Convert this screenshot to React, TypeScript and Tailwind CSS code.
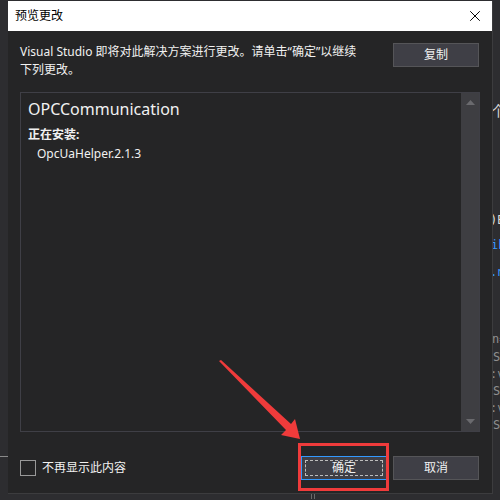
import { X } from "lucide-react";

const font = "font-['Noto_Sans','Noto_Sans_CJK_SC',sans-serif]";

function Btn({ label, primary }: { label: string; primary?: boolean }) {
  return (
    <button
      className={
        "w-[86px] h-[24px] bg-[#3f3f46] text-[12px] text-[#f1f1f1] flex items-center justify-center " +
        (primary ? "border border-[#3399ff] p-[3px]" : "border border-[#555558]")
      }
    >
      {primary ? (
        <span className="w-full h-full border border-dashed border-[#bdbdbd] flex items-center justify-center">
          {label}
        </span>
      ) : (
        label
      )}
    </button>
  );
}

export default function App() {
  return (
    <div className={`w-[500px] h-[500px] bg-[#2d2d30] relative overflow-hidden ${font}`}>
      <div className="flex pt-[1px] h-[494px]">
        {/* left backdrop */}
        <div className="w-[8px] flex flex-col">
          <div className="h-[455px]" />
          <div className="h-[1px] bg-[#8a8a8a]" />
        </div>

        {/* dialog */}
        <div className="w-[485px] flex flex-col bg-[#252526] border-r border-b border-[#3c3c3e]">
          <div className="h-[30px] bg-white flex items-center justify-between pl-[7px] pr-[8px]">
            <span className="text-[12px] text-black">预览更改</span>
            <X size={18} strokeWidth={1.3} className="text-black" />
          </div>

          <div className="flex-1 flex flex-col px-[12px] pt-[12px]">
            <div className="flex justify-between pr-[1px]">
              <p className="text-[12px] leading-[18px] text-[#f1f1f1]">
                Visual Studio 即将对此解决方案进行更改。请单击“确定”以继续
                <br />
                下列更改。
              </p>
              <Btn label="复制" />
            </div>

            <div className="mt-[13px] h-[340px] w-[460px] border border-[#3f3f46] flex">
              <div className="flex-1 pl-[7px] pt-[4px] text-[#f1f1f1]">
                <div className="text-[16px] leading-[24px]">OPCCommunication</div>
                <div className="text-[12px] leading-[18px] font-bold mt-[5px]">正在安装:</div>
                <div className="text-[12px] leading-[18px] pl-[9px] mt-[1px]">OpcUaHelper.2.1.3</div>
              </div>
              <div className="w-[18px] bg-[#3e3e42] flex flex-col justify-between items-center py-[7px]">
                <svg width="9" height="5" viewBox="0 0 9 5">
                  <polygon points="0,5 4.5,0 9,5" fill="#6a6a6e" />
                </svg>
                <svg width="9" height="5" viewBox="0 0 9 5">
                  <polygon points="0,0 9,0 4.5,5" fill="#6a6a6e" />
                </svg>
              </div>
            </div>

            <div className="mt-[24px] flex items-center justify-between">
              <label className="flex items-center gap-[6px] text-[12px] text-[#f1f1f1]">
                <span className="w-[16px] h-[16px] border border-[#999999] bg-[#252526]" />
                不再显示此内容
              </label>
              <div className="flex gap-[6px] pr-[1px]">
                <Btn label="确定" primary />
                <Btn label="取消" />
              </div>
            </div>
          </div>
        </div>

        {/* right backdrop (editor behind) */}
        <div className="w-[7px] overflow-hidden flex flex-col text-[12px] leading-[14px] whitespace-nowrap font-['DejaVu_Sans_Mono',monospace]">
          <div className="h-[102px]" />
          <div className="text-[#d4d4d4] text-[15px] leading-[16px] -ml-[2px]">个</div>
          <div className="h-[94px]" />
          <div className="text-[#dcdcdc] -ml-[3px]">)B</div>
          <div className="h-[11px]" />
          <div className="text-[#3794ff] -ml-[2px]">ib</div>
          <div className="h-[13px]" />
          <div className="text-[#3794ff] -ml-[3px]">.n</div>
          <div className="h-[53px]" />
          <div className="text-[#8f8f8f] -ml-[1px]">n=</div>
          <div className="h-[3px]" />
          <div className="text-[#8f8f8f] leading-[17px]">St</div>
          <div className="text-[#8f8f8f] leading-[17px] -ml-[3px]">:v</div>
          <div className="text-[#8f8f8f] leading-[17px]">St</div>
          <div className="text-[#8f8f8f] leading-[17px] -ml-[3px]">:v</div>
          <div className="text-[#8f8f8f] leading-[17px]">St</div>
        </div>
      </div>

      {/* bottom backdrop */}
      <div className="flex h-[5px] pl-[311px] gap-[2px]">
        <div className="w-[1px] bg-[#6a6a6a]" />
        <div className="w-[1px] bg-[#6a6a6a]" />
      </div>

      {/* red annotation */}
      <div className="absolute left-[298px] top-[443px] w-[91px] h-[48px] border-[3px] border-[#ef3b3b]" />
      <svg className="absolute left-0 top-0" width="500" height="500" viewBox="0 0 500 500">
        <polygon
          points="219,361 221,360 291,424 295,419 300,439 281,435 286,430"
          fill="#ef3b3b"
        />
      </svg>
    </div>
  );
}
